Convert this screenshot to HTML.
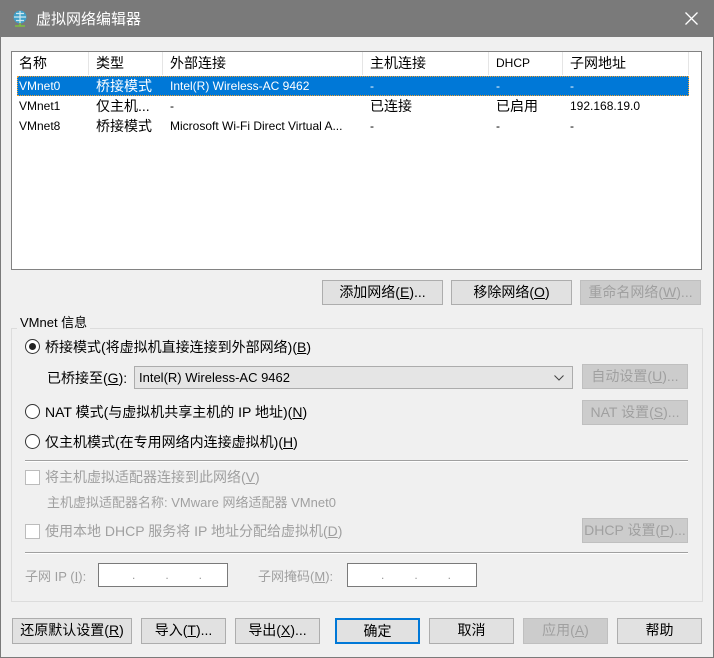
<!DOCTYPE html>
<html><head><meta charset="utf-8"><style>
*{box-sizing:border-box;margin:0;padding:0}
body{width:714px;height:658px;background:#f0f0f0;font-family:"Liberation Sans","Noto Sans CJK SC",sans-serif;font-size:14px;color:#000;position:relative;overflow:hidden}
.a{position:absolute;white-space:nowrap}
.frame{left:0;top:0;width:714px;height:658px;border:1px solid #7a7a7a;pointer-events:none}
.title{left:0;top:0;width:714px;height:37px;background:#7a7a7a;color:#fff;font-size:15px}
.list{left:11px;top:51px;width:691px;height:219px;background:#fff;border:1px solid #828282}
.hd{position:absolute;top:0;height:23px;line-height:23px;font-size:14px;padding-left:7px;border-right:1px solid #e5e5e5}
.cell{position:absolute;font-size:12px;line-height:20px;padding-left:7px}
.btn{position:absolute;background:#e1e1e1;border:1px solid #adadad;text-align:center;line-height:23px;font-size:14px}
.dis{background:#cccccc;border-color:#bfbfbf;color:#a0a0a0}
.radio{position:absolute;width:15px;height:15px;border:1px solid #333;border-radius:50%;background:#fff}
.chk{position:absolute;width:15px;height:15px;border:1px solid #bcbcbc;background:#fff}
.gray{color:#a0a0a0}
.inp{position:absolute;background:#fff;border:1px solid #7a7a7a;height:24px;font-size:12px;color:#999}
u{text-decoration:underline}
</style></head><body>
<div class="a title">
<svg style="position:absolute;left:12px;top:10px" width="16" height="17" viewBox="0 0 16 17"><circle cx="8" cy="7" r="6.5" fill="#3fa0c8"/><path d="M2 7h12M8 1v12M4 3.5h8M4 10.5h8" stroke="#cfe8f0" stroke-width="1.2"/><path d="M8 13v3M3 16h10" stroke="#7ec040" stroke-width="1.5"/></svg>
<span class="a" style="left:36px;top:8px">虚拟网络编辑器</span>
<svg style="position:absolute;left:685px;top:12px" width="13" height="13"><path d="M0.5 0.5L12.5 12.5M12.5 0.5L0.5 12.5" stroke="#fff" stroke-width="1.3"/></svg>
</div>

<div class="a list">
<div class="hd" style="left:0;width:77px">名称</div>
<div class="hd" style="left:77px;width:74px">类型</div>
<div class="hd" style="left:151px;width:200px">外部连接</div>
<div class="hd" style="left:351px;width:126px">主机连接</div>
<div class="hd" style="left:477px;width:74px;font-size:12px">DHCP</div>
<div class="hd" style="left:551px;width:126px">子网地址</div>
<div style="position:absolute;left:5px;top:24px;width:672px;height:20px;background:#0078d7;outline:1px dotted #f0a030;outline-offset:-1px"></div>
<div style="color:#fff">
<div class="cell" style="left:0;top:24px">VMnet0</div><div class="cell" style="left:77px;top:24px;font-size:14px">桥接模式</div><div class="cell" style="left:151px;top:24px">Intel(R) Wireless-AC 9462</div><div class="cell" style="left:351px;top:24px">-</div><div class="cell" style="left:477px;top:24px">-</div><div class="cell" style="left:551px;top:24px">-</div>
</div>
<div class="cell" style="left:0;top:44px">VMnet1</div><div class="cell" style="left:77px;top:44px;font-size:14px">仅主机...</div><div class="cell" style="left:151px;top:44px">-</div><div class="cell" style="left:351px;top:44px;font-size:14px">已连接</div><div class="cell" style="left:477px;top:44px;font-size:14px">已启用</div><div class="cell" style="left:551px;top:44px">192.168.19.0</div>
<div class="cell" style="left:0;top:64px">VMnet8</div><div class="cell" style="left:77px;top:64px;font-size:14px">桥接模式</div><div class="cell" style="left:151px;top:64px">Microsoft Wi-Fi Direct Virtual A...</div><div class="cell" style="left:351px;top:64px">-</div><div class="cell" style="left:477px;top:64px">-</div><div class="cell" style="left:551px;top:64px">-</div>
</div>

<div class="btn" style="left:322px;top:280px;width:121px;height:25px">添加网络(<u>E</u>)...</div>
<div class="btn" style="left:451px;top:280px;width:121px;height:25px">移除网络(<u>O</u>)</div>
<div class="btn dis" style="left:580px;top:280px;width:121px;height:25px">重命名网络(<u>W</u>)...</div>

<div class="a" style="left:11px;top:328px;width:692px;height:274px;border:1px solid #dcdcdc"></div>
<div class="a" style="left:17px;top:312px;background:#f0f0f0;padding:0 3px;font-size:13px">VMnet 信息</div>

<div class="radio" style="left:25px;top:339px"><div style="position:absolute;left:3px;top:3px;width:7px;height:7px;border-radius:50%;background:#222"></div></div>
<div class="a" style="left:45px;top:337px">桥接模式(将虚拟机直接连接到外部网络)(<u>B</u>)</div>
<div class="a" style="left:47px;top:368px">已桥接至(<u>G</u>):</div>
<div class="a" style="left:134px;top:366px;width:439px;height:23px;background:#e5e5e5;border:1px solid #acacac;font-size:13px;line-height:21px;padding-left:4px">Intel(R) Wireless-AC 9462
<svg style="position:absolute;right:8px;top:8px" width="10" height="6"><path d="M0.5 0.5L5 5L9.5 0.5" stroke="#444" fill="none"/></svg></div>
<div class="btn dis" style="left:582px;top:364px;width:106px;height:25px">自动设置(<u>U</u>)...</div>
<div class="radio" style="left:25px;top:404px"></div>
<div class="a" style="left:45px;top:402px">NAT 模式(与虚拟机共享主机的 IP 地址)(<u>N</u>)</div>
<div class="btn dis" style="left:582px;top:400px;width:106px;height:25px">NAT 设置(<u>S</u>)...</div>
<div class="radio" style="left:25px;top:434px"></div>
<div class="a" style="left:45px;top:432px">仅主机模式(在专用网络内连接虚拟机)(<u>H</u>)</div>
<div class="a" style="left:25px;top:460px;width:663px;height:2px;border-top:1px solid #a0a0a0;border-bottom:1px solid #fff"></div>

<div class="chk" style="left:25px;top:470px"></div>
<div class="a gray" style="left:45px;top:467px">将主机虚拟适配器连接到此网络(<u>V</u>)</div>
<div class="a gray" style="left:47px;top:492px;font-size:13px">主机虚拟适配器名称: VMware 网络适配器 VMnet0</div>
<div class="chk" style="left:25px;top:524px"></div>
<div class="a gray" style="left:45px;top:521px">使用本地 DHCP 服务将 IP 地址分配给虚拟机(<u>D</u>)</div>
<div class="btn dis" style="left:582px;top:518px;width:106px;height:25px">DHCP 设置(<u>P</u>)...</div>
<div class="a" style="left:25px;top:552px;width:663px;height:2px;border-top:1px solid #a0a0a0;border-bottom:1px solid #fff"></div>

<div class="a gray" style="left:25px;top:566px;font-size:13px">子网 IP (<u>I</u>):</div>
<div class="inp" style="left:98px;top:563px;width:130px"><span class="a" style="left:33px;top:4px">.&nbsp;&nbsp;&nbsp;&nbsp;&nbsp;&nbsp;&nbsp;&nbsp;&nbsp;.&nbsp;&nbsp;&nbsp;&nbsp;&nbsp;&nbsp;&nbsp;&nbsp;&nbsp;.</span></div>
<div class="a gray" style="left:258px;top:566px;font-size:13px">子网掩码(<u>M</u>):</div>
<div class="inp" style="left:347px;top:563px;width:130px"><span class="a" style="left:33px;top:4px">.&nbsp;&nbsp;&nbsp;&nbsp;&nbsp;&nbsp;&nbsp;&nbsp;&nbsp;.&nbsp;&nbsp;&nbsp;&nbsp;&nbsp;&nbsp;&nbsp;&nbsp;&nbsp;.</span></div>

<div class="btn" style="left:12px;top:618px;width:120px;height:26px">还原默认设置(<u>R</u>)</div>
<div class="btn" style="left:141px;top:618px;width:85px;height:26px">导入(<u>T</u>)...</div>
<div class="btn" style="left:235px;top:618px;width:85px;height:26px">导出(<u>X</u>)...</div>
<div class="btn" style="left:335px;top:618px;width:85px;height:26px;border:2px solid #0078d7;line-height:22px">确定</div>
<div class="btn" style="left:429px;top:618px;width:85px;height:26px">取消</div>
<div class="btn dis" style="left:523px;top:618px;width:85px;height:26px">应用(<u>A</u>)</div>
<div class="btn" style="left:617px;top:618px;width:85px;height:26px">帮助</div>
<div class="a frame"></div>
</body></html>
